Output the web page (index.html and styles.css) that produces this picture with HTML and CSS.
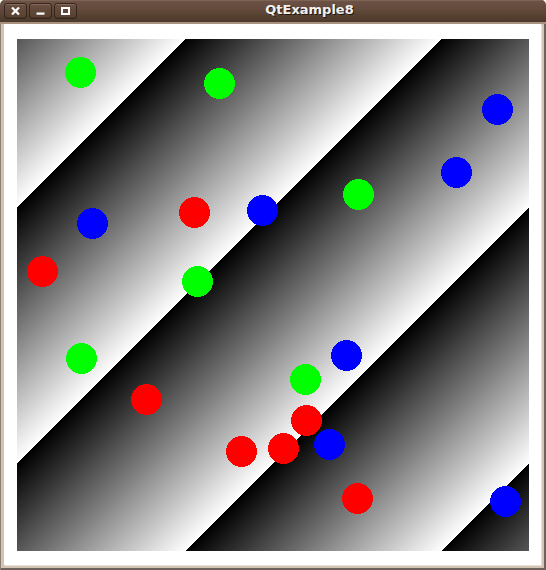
FILE: index.html
```html
<!DOCTYPE html>
<html>
<head>
<meta charset="utf-8">
<title>QtExample8</title>
<link rel="stylesheet" href="styles.css">
</head>
<body>
<div class="window">
  <div class="titlebar">
    <div class="buttons">
      <span class="btn"><svg width="9" height="8" viewBox="0 0 9 8"><path d="M1 0.5 L8 7.5 M8 0.5 L1 7.5" stroke="#fff" stroke-width="2.2" fill="none"/></svg></span>
      <span class="btn"><svg width="9" height="8" viewBox="0 0 9 8"><rect x="0.5" y="5.5" width="8" height="2.2" fill="#fff"/></svg></span>
      <span class="btn"><svg width="9" height="8" viewBox="0 0 9 8"><rect x="1" y="1" width="7" height="6" stroke="#fff" stroke-width="2" fill="none"/></svg></span>
    </div>
    <div class="title">QtExample8</div>
  </div>
  <div class="frame">
    <div class="client">
      <div class="canvas">
        <svg class="dots" width="512" height="512" viewBox="0 0 512 512" shape-rendering="crispEdges">
          <g fill="#00ff00">
            <circle cx="63.5" cy="33.5" r="15.5"/>
            <circle cx="202.5" cy="44.5" r="15.5"/>
            <circle cx="341.5" cy="155.5" r="15.5"/>
            <circle cx="180.5" cy="242.5" r="15.5"/>
            <circle cx="64.5" cy="319.5" r="15.5"/>
            <circle cx="288.5" cy="340.5" r="15.5"/>
          </g>
          <g fill="#ff0000">
            <circle cx="177.5" cy="173.5" r="15.5"/>
            <circle cx="25.5" cy="232.5" r="15.5"/>
            <circle cx="129.5" cy="360.5" r="15.5"/>
            <circle cx="289.5" cy="381.5" r="15.5"/>
            <circle cx="224.5" cy="412.5" r="15.5"/>
            <circle cx="266.5" cy="409.5" r="15.5"/>
            <circle cx="340.5" cy="459.5" r="15.5"/>
          </g>
          <g fill="#0000ff">
            <circle cx="480.5" cy="70.5" r="15.5"/>
            <circle cx="439.5" cy="133.5" r="15.5"/>
            <circle cx="75.5" cy="184.5" r="15.5"/>
            <circle cx="245.5" cy="171.5" r="15.5"/>
            <circle cx="329.5" cy="316.5" r="15.5"/>
            <circle cx="312.5" cy="405.5" r="15.5"/>
            <circle cx="488.5" cy="462.5" r="15.5"/>
          </g>
        </svg>
      </div>
    </div>
  </div>
</div>
</body>
</html>
```
FILE: styles.css
```css
html, body {
  margin: 0;
  padding: 0;
  background: #ffffff;
}

.window {
  width: 546px;
  height: 570px;
  display: flex;
  flex-direction: column;
  border-radius: 5px 5px 0 0;
  overflow: hidden;
  background: #d3c4b3;
}

.titlebar {
  height: 22px;
  flex: 0 0 22px;
  display: flex;
  align-items: flex-start;
  background: linear-gradient(#6d5345 0%, #634a3c 40%, #55402f 75%, #4b382c 100%);
  border-bottom: 2px solid #a8917f;
  box-shadow: inset 0 1px 0 #7d6353;
}

.buttons {
  display: flex;
  gap: 2px;
  padding: 3px 0 0 4px;
}

.btn {
  width: 21px;
  height: 14px;
  border: 1px solid #34261e;
  border-radius: 3px;
  background: linear-gradient(#6a5041, #56402f);
  box-shadow: inset 0 1px 0 #86695a, inset 0 -1px 0 #4a3528;
  display: flex;
  align-items: center;
  justify-content: center;
}

.btn svg {
  display: block;
}

.title {
  flex: 1;
  text-align: center;
  padding-right: 4px;
  font-family: "DejaVu Sans", "Liberation Sans", sans-serif;
  font-weight: bold;
  font-size: 13px;
  line-height: 20px;
  color: #f2f1ee;
  text-shadow: 1px 1px 0 #1e1510;
}

.frame {
  flex: 1;
  display: flex;
  padding: 0 5px 5px 4px;
  background: #d3c4b3;
  box-shadow: inset 1px 0 0 #8c7f74, inset -2px -2px 0 #6b625b;
}

.client {
  flex: 1;
  background: #ffffff;
  padding: 15px 0 0 13px;
  box-shadow: 1px 1px 0 #e9e1d8;
}

.canvas {
  width: 512px;
  height: 512px;
  background: repeating-linear-gradient(135deg, #000000 119.5px, #ffffff 300.5px);
}

.dots {
  display: block;
}
```
